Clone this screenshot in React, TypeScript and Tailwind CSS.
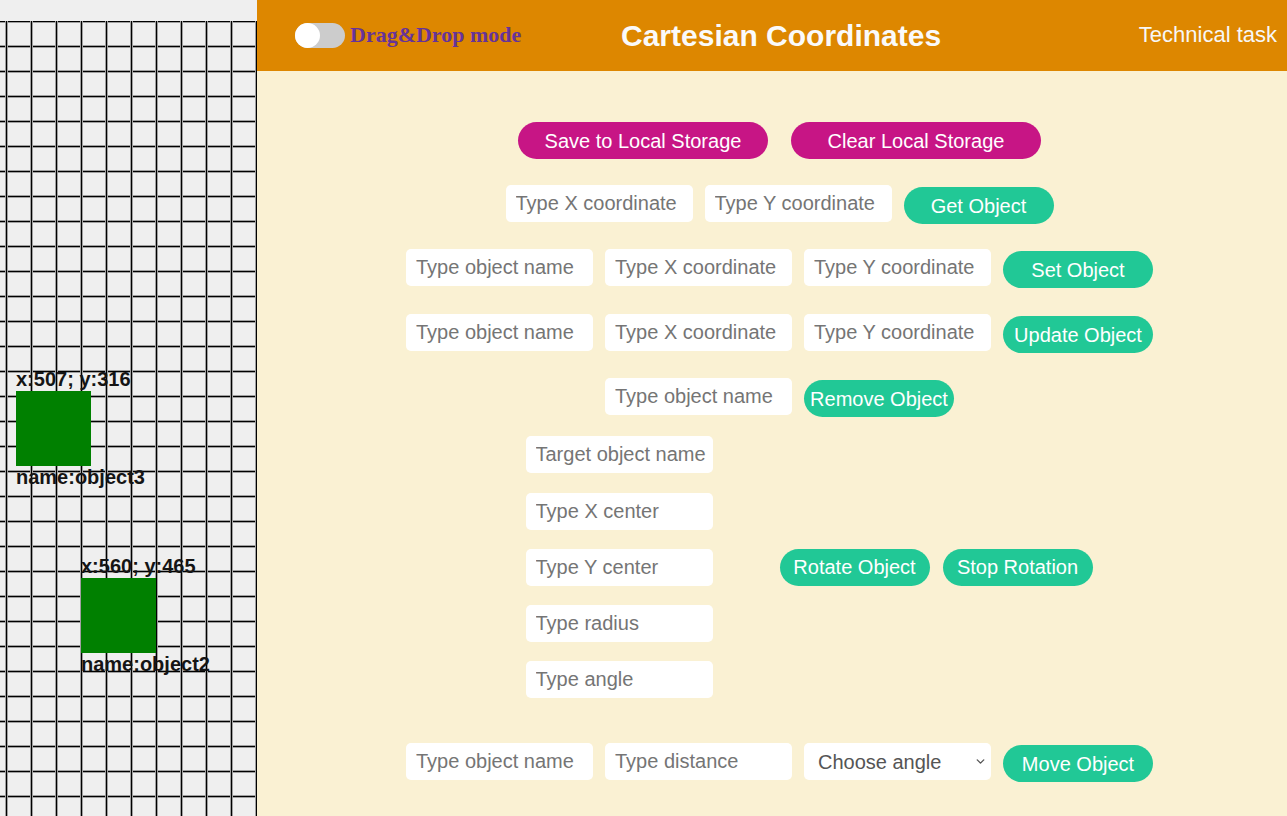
import { ChevronDown } from "lucide-react";

const FONT = "font-['Liberation_Sans',Arial,sans-serif]";

const inputCls =
  "w-[187px] h-[37px] pl-[10px] pr-[4px] bg-white rounded-[5px] text-[20px] text-[#333] placeholder:text-[#757575] outline-none";

const greenBtn =
  "w-[150px] h-[37px] mt-[2px] rounded-full bg-[#21c896] text-white text-[20px] leading-none";

type ObjProps = { x: number; y: number; name: string };

function CanvasObject({ x, y, name }: ObjProps) {
  return (
    <div className="text-[20px] font-bold leading-[23px] text-[#151515] whitespace-nowrap">
      <div>
        x:{x}; y:{y}
      </div>
      <div className="w-[75px] h-[75px] bg-[#008000]" />
      <div>name:{name}</div>
    </div>
  );
}

function Field({ placeholder, className = "" }: { placeholder: string; className?: string }) {
  return <input type="text" placeholder={placeholder} className={`${inputCls} ${className}`} />;
}

export default function App() {
  return (
    <div className={`flex w-full h-screen overflow-hidden ${FONT}`}>
      {/* Canvas */}
      <aside className="relative w-[257px] shrink-0 h-full bg-[#efefef] flex flex-col">
        <div className="mt-[21px] flex-1 bg-[linear-gradient(to_right,#a0a0a0_1px,#000_1px,#000_2px,#a0a0a0_2px,#a0a0a0_3px,transparent_3px),linear-gradient(to_bottom,#a0a0a0_1px,#000_1px,#000_2px,#a0a0a0_2px,#a0a0a0_3px,transparent_3px)] bg-[length:25px_25px] bg-[position:5px_-1px]" />
        <div className="absolute left-[16px] top-[368px]">
          <CanvasObject x={507} y={316} name="object3" />
        </div>
        <div className="absolute left-[81px] top-[555px]">
          <CanvasObject x={560} y={465} name="object2" />
        </div>
      </aside>

      <div className="flex-1 flex flex-col min-w-0">
        {/* Header */}
        <header className="h-[71px] shrink-0 bg-[#dd8700] flex items-center">
          <div className="w-[364px] pl-[38px] flex items-center gap-[5px]">
            <div className="w-[50px] h-[25px] rounded-full bg-[#cccccc] flex items-center">
              <div className="w-[25px] h-[25px] rounded-full bg-white" />
            </div>
            <span className="font-['Liberation_Serif','Times_New_Roman',serif] font-bold text-[22px] text-[#663399] -mt-[2px]">
              Drag&amp;Drop mode
            </span>
          </div>
          <h1 className="text-[30px] font-bold text-[#fafafa]">
            Cartesian Coordinates
          </h1>
          <span className="ml-auto pr-[10px] text-[22px] text-[#f7f7f7] -mt-[2px]">
            Technical task
          </span>
        </header>

        {/* Controls */}
        <main className="flex-1 bg-[#faf1d3] flex flex-col items-center pl-[15px] pt-[51px]">
          <div className="flex gap-[23px]">
            <button className="w-[250px] h-[37px] rounded-full bg-[#c71585] text-white text-[20px]">
              Save to Local Storage
            </button>
            <button className="w-[250px] h-[37px] rounded-full bg-[#c71585] text-white text-[20px]">
              Clear Local Storage
            </button>
          </div>

          <div className="mt-[26px] flex items-start gap-[12px]">
            <Field placeholder="Type X coordinate" />
            <Field placeholder="Type Y coordinate" />
            <button className={greenBtn}>Get Object</button>
          </div>

          <div className="mt-[25px] flex items-start gap-[12px]">
            <Field placeholder="Type object name" />
            <Field placeholder="Type X coordinate" />
            <Field placeholder="Type Y coordinate" />
            <button className={greenBtn}>Set Object</button>
          </div>

          <div className="mt-[26px] flex items-start gap-[12px]">
            <Field placeholder="Type object name" />
            <Field placeholder="Type X coordinate" />
            <Field placeholder="Type Y coordinate" />
            <button className={greenBtn}>Update Object</button>
          </div>

          <div className="mt-[25px] flex items-start gap-[12px]">
            <Field placeholder="Type object name" />
            <button className={greenBtn}>Remove Object</button>
          </div>

          {/* Rotation */}
          <div className="mt-[19px] ml-[59px] flex items-center">
            <div className="flex flex-col gap-[19px]">
              <Field placeholder="Target object name" className="mb-[1px]" />
              <Field placeholder="Type X center" />
              <Field placeholder="Type Y center" />
              <Field placeholder="Type radius" />
              <Field placeholder="Type angle" />
            </div>
            <div className="ml-[67px] flex gap-[13px]">
              <button className="w-[150px] h-[37px] rounded-full bg-[#21c896] text-white text-[20px]">
                Rotate Object
              </button>
              <button className="w-[150px] h-[37px] rounded-full bg-[#21c896] text-white text-[20px]">
                Stop Rotation
              </button>
            </div>
          </div>

          <div className="mt-[45px] flex items-start gap-[12px]">
            <Field placeholder="Type object name" />
            <Field placeholder="Type distance" />
            <div className="relative">
              <select
                defaultValue=""
                className="w-[187px] h-[37px] pl-[14px] pr-[28px] bg-white rounded-[5px] text-[20px] text-[#555] appearance-none outline-none"
              >
                <option value="" disabled>
                  Choose angle
                </option>
                <option value="0">0°</option>
                <option value="90">90°</option>
                <option value="180">180°</option>
                <option value="270">270°</option>
              </select>
              <ChevronDown
                className="absolute right-[4px] top-[12px] w-[13px] h-[13px] text-[#555] pointer-events-none"
                strokeWidth={2.5}
              />
            </div>
            <button className={greenBtn}>Move Object</button>
          </div>
        </main>
      </div>
    </div>
  );
}
